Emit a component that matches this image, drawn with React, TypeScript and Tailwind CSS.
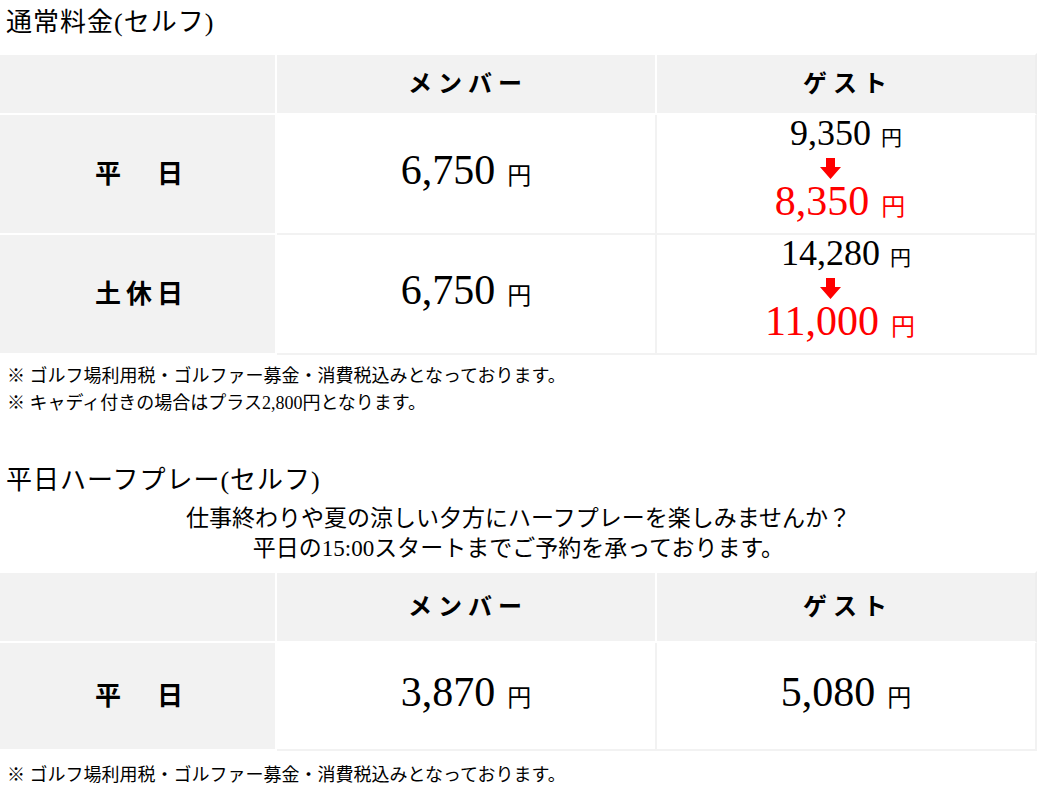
import React from "react";

const font = "font-['Liberation_Serif','Noto_Sans_CJK_JP',serif]";

function Arrow() {
  return (
    <svg width="21" height="21" viewBox="0 0 21 21" className="block">
      <path d="M6 0H15V9H21L10.5 21L0 9H6Z" fill="#ff0000" />
    </svg>
  );
}

function Yen({ value, big, red }: { value: string; big?: boolean; red?: boolean }) {
  return (
    <div className={`whitespace-nowrap ${red ? "text-[#ff0000]" : "text-black"} ${big ? "leading-[46px]" : "leading-[34px]"}`}>
      <span className={big ? "text-[42px]" : "text-[36px]"}>{value}</span>
      <span className={big ? "ml-[12px] text-[24px]" : "ml-[10px] text-[21px]"}>円</span>
    </div>
  );
}

function HeaderRow({ h }: { h: string }) {
  return (
    <>
      <div className={`${h} bg-[#f2f2f2] border-t-2 border-b-2 border-r-2 border-white`} />
      <div className={`${h} bg-[#f2f2f2] border-t-2 border-b-2 border-r-2 border-white flex items-center justify-center pl-[4px] text-[24px] font-bold tracking-[6px]`}>
        メンバー
      </div>
      <div className={`${h} bg-[#f2f2f2] border-t-2 border-b-2 border-white border-r-2 border-r-[#eeeeee] flex items-center justify-center pl-[4px] text-[24px] font-bold tracking-[6px]`}>
        ゲスト
      </div>
    </>
  );
}

function Label({ text, h }: { text: string; h: string }) {
  return (
    <div className={`${h} bg-[#f2f2f2] border-b-2 border-r-2 border-white flex items-center justify-center pl-[8px] text-[26px] font-bold tracking-[5px]`}>
      {text}
    </div>
  );
}

function Cell({ h, children }: { h: string; children: React.ReactNode }) {
  return (
    <div className={`${h} bg-white border-b-2 border-r-2 border-[#f2f2f2] flex flex-col items-center justify-center`}>
      {children}
    </div>
  );
}

function Discount({ from, to }: { from: string; to: string }) {
  return (
    <>
      <Yen value={from} />
      <div className="my-[1px] pr-[32px] flex justify-center">
        <Arrow />
      </div>
      <div className="pr-[12px] -mt-[2px]">
        <Yen value={to} big red />
      </div>
    </>
  );
}

function Note({ children }: { children: React.ReactNode }) {
  return <p className="pl-[7px] text-[18px] leading-[27px]">{children}</p>;
}

export default function App() {
  return (
    <div className={`w-[1037px] bg-white text-black ${font}`}>
      <h2 className="h-[53px] pl-[6px] text-[26px] leading-[45px] tracking-[1px] font-normal">通常料金(セルフ)</h2>

      <div className="grid grid-cols-[277px_380px_380px]">
        <HeaderRow h="h-[62px]" />

        <Label text="平　日" h="h-[120px]" />
        <Cell h="h-[120px]">
          <Yen value="6,750" big />
        </Cell>
        <Cell h="h-[120px]">
          <Discount from="9,350" to="8,350" />
        </Cell>

        <Label text="土休日" h="h-[120px]" />
        <Cell h="h-[120px]">
          <Yen value="6,750" big />
        </Cell>
        <Cell h="h-[120px]">
          <Discount from="14,280" to="11,000" />
        </Cell>
      </div>

      <div className="mt-[8px]">
        <Note>※ ゴルフ場利用税・ゴルファー募金・消費税込みとなっております。</Note>
        <Note>※ キャディ付きの場合はプラス2,800円となります。</Note>
      </div>

      <h2 className="mt-[41px] h-[46px] pl-[6px] text-[26px] leading-[45px] tracking-[1px] font-normal">平日ハーフプレー(セルフ)</h2>
      <p className="text-center text-[23px] leading-[30px]">
        仕事終わりや夏の涼しい夕方にハーフプレーを楽しみませんか？
        <br />
        平日の15:00スタートまでご予約を承っております。
      </p>

      <div className="mt-[7px] grid grid-cols-[277px_380px_380px]">
        <HeaderRow h="h-[72px]" />
        <Label text="平　日" h="h-[108px]" />
        <Cell h="h-[108px]">
          <Yen value="3,870" big />
        </Cell>
        <Cell h="h-[108px]">
          <Yen value="5,080" big />
        </Cell>
      </div>

      <div className="mt-[11px] pb-[6px]">
        <Note>※ ゴルフ場利用税・ゴルファー募金・消費税込みとなっております。</Note>
      </div>
    </div>
  );
}
